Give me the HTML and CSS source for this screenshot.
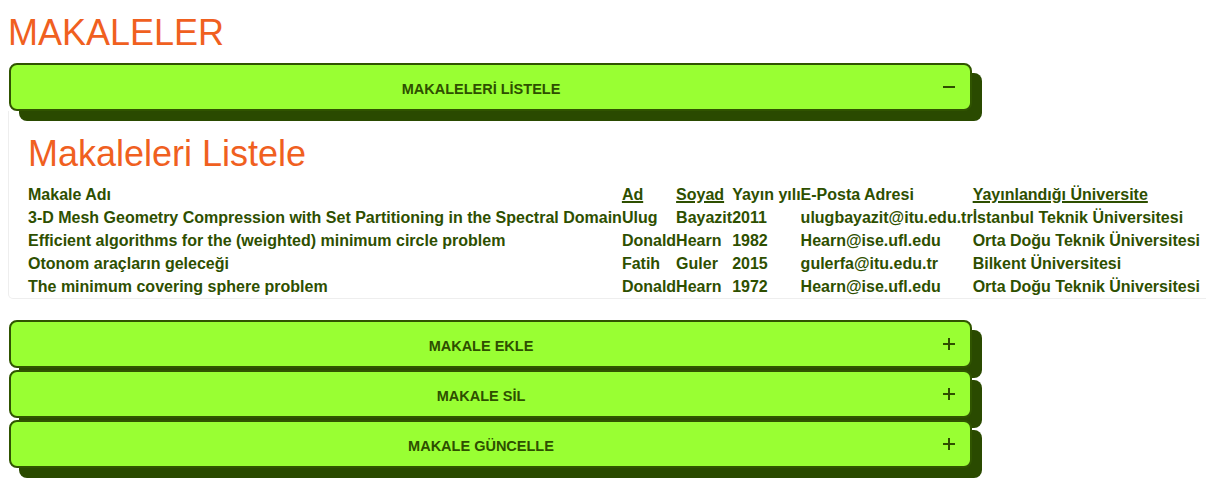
FILE: index.html
```html
<!DOCTYPE html>
<html lang="tr">
<head>
<meta charset="utf-8">
<title>Makaleler</title>
<link rel="stylesheet" href="styles.css">
</head>
<body>
<h1 class="page-title">MAKALELER</h1>
<div class="accordion">
  <div class="acc-header">
    <span class="acc-label">MAKALELERİ LİSTELE</span>
    <svg class="acc-icon" viewBox="0 0 12 12" width="12" height="12"><path d="M0 6H12"/></svg>
  </div>
  <div class="acc-panel">
    <h2 class="panel-title">Makaleleri Listele</h2>
    <table class="articles">
      <thead>
        <tr>
          <th>Makale Adı</th>
          <th><a href="#">Ad</a></th>
          <th><a href="#">Soyad</a></th>
          <th>Yayın yılı</th>
          <th>E-Posta Adresi</th>
          <th><a href="#">Yayınlandığı Üniversite</a></th>
        </tr>
      </thead>
      <tbody>
        <tr><td>3-D Mesh Geometry Compression with Set Partitioning in the Spectral Domain</td><td>Ulug</td><td>Bayazit</td><td>2011</td><td>ulugbayazit@itu.edu.tr</td><td>İstanbul Teknik Üniversitesi</td></tr>
        <tr><td>Efficient algorithms for the (weighted) minimum circle problem</td><td>Donald</td><td>Hearn</td><td>1982</td><td>Hearn@ise.ufl.edu</td><td>Orta Doğu Teknik Üniversitesi</td></tr>
        <tr><td>Otonom araçların geleceği</td><td>Fatih</td><td>Guler</td><td>2015</td><td>gulerfa@itu.edu.tr</td><td>Bilkent Üniversitesi</td></tr>
        <tr><td>The minimum covering sphere problem</td><td>Donald</td><td>Hearn</td><td>1972</td><td>Hearn@ise.ufl.edu</td><td>Orta Doğu Teknik Üniversitesi</td></tr>
      </tbody>
    </table>
  </div>
  <div class="acc-header first-closed">
    <span class="acc-label">MAKALE EKLE</span>
    <svg class="acc-icon" viewBox="0 0 12 12" width="12" height="12"><path d="M0 6H12M6 0V12"/></svg>
  </div>
  <div class="acc-header">
    <span class="acc-label">MAKALE SİL</span>
    <svg class="acc-icon" viewBox="0 0 12 12" width="12" height="12"><path d="M0 6H12M6 0V12"/></svg>
  </div>
  <div class="acc-header">
    <span class="acc-label">MAKALE GÜNCELLE</span>
    <svg class="acc-icon" viewBox="0 0 12 12" width="12" height="12"><path d="M0 6H12M6 0V12"/></svg>
  </div>
</div>
</body>
</html>
```

FILE: styles.css
```css
html {
  overflow: hidden;
}

body {
  margin: 0;
  padding: 0 8px 16px;
  background: #ffffff;
  font-family: "Liberation Sans", Arial, sans-serif;
}

.page-title {
  margin: 12px 0 10px;
  font-size: 36px;
  line-height: 41px;
  font-weight: normal;
  color: #f0601f;
}

.accordion {
  width: 964px;
}

.acc-header {
  position: relative;
  z-index: 1;
  display: flex;
  align-items: center;
  box-sizing: border-box;
  height: 48px;
  margin-left: 1px;
  padding: 0 15px 0 8px;
  border: 2px solid #305400;
  border-radius: 8px;
  background: #99ff33;
  box-shadow: 10px 10px 0 #2a4a00;
  color: #2e4f00;
}

.acc-header + .acc-header {
  margin-top: 2px;
}

.first-closed {
  margin-top: 21px;
}

.acc-label {
  flex: 1;
  text-align: center;
  font-size: 14.5px;
  font-weight: bold;
  padding-top: 4px;
}

.acc-icon {
  flex: none;
  width: 12px;
  height: 12px;
  fill: none;
  stroke: #2e4f00;
  stroke-width: 2;
}

.acc-panel {
  width: max-content;
  padding: 22px 19px 0 19px;
  border: 1px solid #eeeeee;
  border-top: 0;
  border-radius: 0 0 5px 5px;
}

.panel-title {
  margin: 0 0 9px;
  font-size: 36px;
  line-height: 41px;
  font-weight: normal;
  color: #f0601f;
}

.articles {
  border-collapse: collapse;
  font-size: 16px;
  line-height: 23px;
  font-weight: bold;
  color: #2e4f00;
}

.articles th,
.articles td {
  padding: 0;
  text-align: left;
  white-space: nowrap;
  font-weight: bold;
}

.articles a {
  color: #2e4f00;
  text-decoration: underline;
  text-decoration-thickness: 2px;
}
```
